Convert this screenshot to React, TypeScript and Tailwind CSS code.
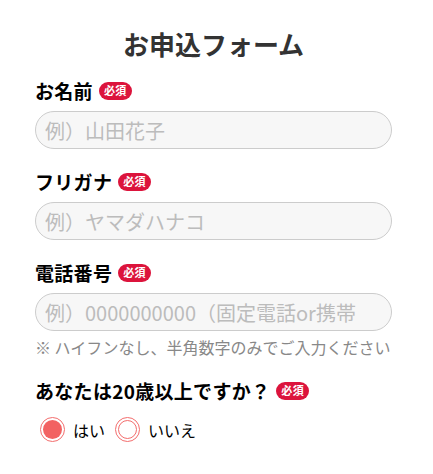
import React, { useState } from "react";

const font = { fontFamily: '"Noto Sans CJK JP", "Noto Sans", sans-serif' };

function Badge() {
  return (
    <span className="ml-[6px] inline-flex h-[18px] items-center rounded-full bg-[#dc143c] px-[5px] text-[11px] font-bold leading-none text-white">
      必須
    </span>
  );
}

function Label({ children }: { children: React.ReactNode }) {
  return (
    <div className="flex h-[27px] items-center text-[19px] font-bold leading-[27px] tracking-[0.3px] text-black">
      {children}
      <Badge />
    </div>
  );
}

function Field({ placeholder }: { placeholder: string }) {
  return (
    <input
      type="text"
      placeholder={placeholder}
      className="mt-[7px] h-[38px] w-full rounded-full border border-[#cccccc] bg-[#f7f7f7] px-[9px] text-[20px] text-[#333] placeholder-[#bcbcbc] outline-none"
    />
  );
}

function Radio({ checked, label, onClick }: { checked: boolean; label: string; onClick: () => void }) {
  return (
    <button type="button" onClick={onClick} className="flex items-center gap-[8px]">
      <span className="flex h-[25px] w-[25px] items-center justify-center rounded-full border-[1.5px] border-[#f36d6d] bg-white">
        <span
          className={
            checked
              ? "h-[19px] w-[19px] rounded-full bg-[#f26262]"
              : "h-[19px] w-[19px] rounded-full border-[1.5px] border-[#f36d6d]"
          }
        />
      </span>
      <span className="text-[16px] leading-[24px] text-black">{label}</span>
    </button>
  );
}

export default function App() {
  const [adult, setAdult] = useState(true);

  return (
    <div className="min-h-[474px] bg-white" style={font}>
      <div className="ml-[35px] w-[357px] pt-[24px]">
        <h1 className="text-center text-[26px] font-bold leading-[39px] text-[#333333]">お申込フォーム</h1>

        <div className="mt-[14px]">
          <Label>お名前</Label>
          <Field placeholder="例）山田花子" />
        </div>

        <div className="mt-[19px]">
          <Label>フリガナ</Label>
          <Field placeholder="例）ヤマダハナコ" />
        </div>

        <div className="mt-[19px]">
          <Label>電話番号</Label>
          <Field placeholder="例）0000000000（固定電話or携帯" />
          <p className="mt-[4px] whitespace-nowrap text-[16px] leading-[24px] text-[#888888]">
            ※ ハイフンなし、半角数字のみでご入力ください
          </p>
        </div>

        <div className="mt-[18px]">
          <Label>あなたは20歳以上ですか？</Label>
          <div className="mt-[13px] flex items-center gap-[10px] pl-[5px]">
            <Radio checked={adult} label="はい" onClick={() => setAdult(true)} />
            <Radio checked={!adult} label="いいえ" onClick={() => setAdult(false)} />
          </div>
        </div>
      </div>
    </div>
  );
}
